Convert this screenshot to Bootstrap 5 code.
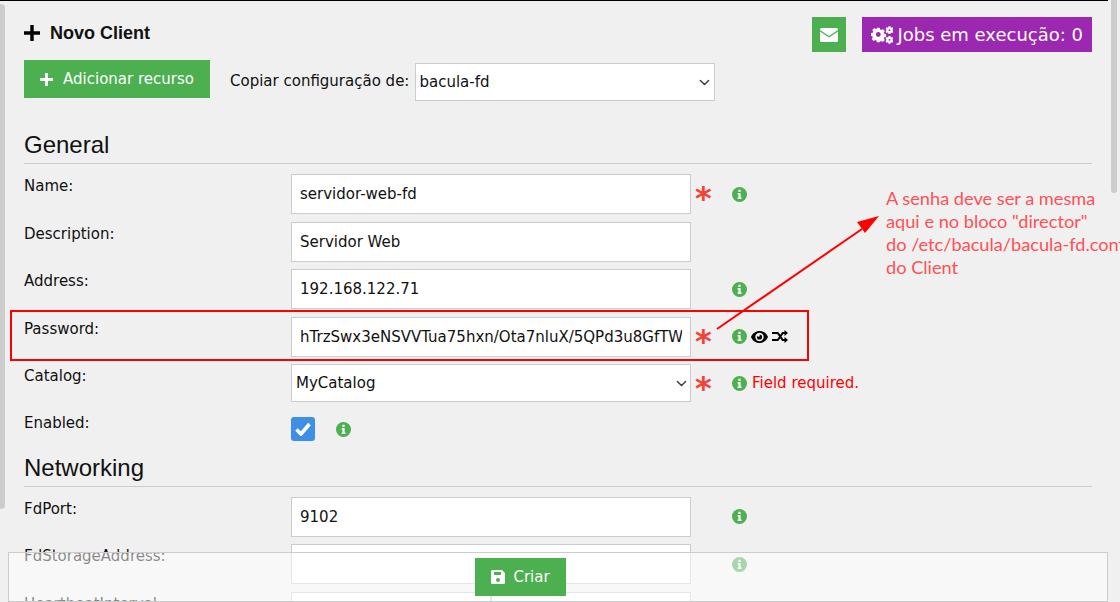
<!DOCTYPE html>
<html lang="en">
<head>
    <meta charset="UTF-8">
    <meta name="viewport" content="width=device-width, initial-scale=1.0">
    <title>Novo Client</title>
    <link href="https://cdn.jsdelivr.net/npm/bootstrap@5.3.2/dist/css/bootstrap.min.css" rel="stylesheet">
    <style>
        html, body { height: 100%; overflow: hidden; }
        body { background: #f0f0f0; color: #111; font-family: "DejaVu Sans", sans-serif; font-size: 15px; }
        .page { position: relative; height: 602px; overflow: hidden; }
        .top-line { position: absolute; left: 0; top: 0; width: 1108px; height: 1px; background: #000; }
        .scroll-left { position: absolute; left: 0; top: 4px; width: 5px; height: 505px; background: #ccc; border-radius: 0 4px 4px 0; }
        .scroll-right { position: absolute; left: 1108px; top: 0; width: 12px; height: 602px; background: #f0f0f0; }
        .scroll-right i { display: block; margin-left: 3px; width: 6px; height: 193px; background: #ccc; border-radius: 0 0 3px 3px; }
        .content { width: 1068px; margin-left: 24px; }
        .title-row { height: 60px; padding-top: 17px; }
        .title-txt { font-family: "Liberation Sans", sans-serif; font-weight: 700; font-size: 18px; line-height: 32px; color: #111; gap: 10px; }
        .sq-btn { background: #4caf50; color: #fff; width: 34px; height: 35px; border-radius: 0; border: 0; padding: 0; }
        .jobs-btn { background: #9c27b0; color: #fff; height: 35px; width: 230px; border-radius: 0; border: 0; padding: 0 9px; font-size: 18px; white-space: nowrap; }
        .action-row { height: 60px; }
        .add-btn { background: #4caf50; color: #fff; border: 0; border-radius: 0; height: 38px; width: 186px; font-size: 15px; padding: 0; gap: 10px; }
        .copy-lbl { margin: 10px 0 0 20px; }
        .copy-select { width: 300px; height: 38px; margin: 3px 0 0 6px; border-radius: 0; border: 1px solid #ccc; padding: 0 3px; font-size: 15px; color: #111; background-size: 11px 11px; background-position: right 4px center; }
        .sec-title { font-family: "Liberation Sans", sans-serif; font-size: 24px; line-height: 28px; margin: 0; padding-bottom: 4px; border-bottom: 1px solid #ccc; color: #111; }
        .sec-gen { margin-top: 11px; }
        .sec-gap { height: 10px; }
        .form-line { height: 47.5px; }
        .check-line { height: 42px; }
        .form-name { width: 267px; padding-top: 2px; line-height: 20px; flex: none; white-space: nowrap; }
        .check-line .form-name { padding-top: 1px; }
        .form-ctl { width: 400px; flex: none; }
        .form-ctl .form-control, .form-ctl .form-select { height: 40px; border-radius: 0; border: 1px solid #ccc; font-size: 15px; color: #111; padding: 0 8px; }
        .form-ctl .form-select { height: 38px; padding: 0 4px; background-size: 11px 11px; background-position: right 3px center; }
        .half-input { width: 200px; }
        .req-mark { width: 41px; flex: none; color: #f44336; font-size: 32px; line-height: 40px; padding: 4px 0 0 4px; font-weight: 700; height: 47px; overflow: hidden; }
        .info-ico { width: 15px; height: 15px; flex: none; }
        .ico-wrap { height: 40px; }
        .ico-wrap-sel { height: 38px; }
        .err-txt { color: #f00; font-size: 15px; margin-left: 5px; }
        .big-check { width: 24px; height: 24px; background: #3d8fe8; border-radius: 3px; margin-top: 5px; display: flex; align-items: center; justify-content: center; }
        .check-info { margin: 10px 0 0 21px; }
        .red-box { position: absolute; left: 10px; top: 310px; width: 799px; height: 51px; border: 2px solid #f00; }
        .note-arrow { position: absolute; left: 700px; top: 200px; width: 200px; height: 140px; }
        .note-txt { position: absolute; left: 886px; top: 187px; width: 234px; height: 94px; overflow: hidden; white-space: nowrap; color: #ff5055; font-family: Lato, sans-serif; font-weight: 400; font-size: 18.200px; line-height: 23px; }
        .save-bar { position: absolute; left: 8px; top: 552px; width: 1100px; height: 50px; background: rgba(255,255,255,.5); border: 1px solid #ccc; }
        .save-btn { position: absolute; left: 466px; top: 5px; width: 91px; height: 38px; background: #4caf50; color: #fff; border: 0; border-radius: 0; padding: 0; font-size: 15px; }
    </style>
</head>
<body>
<div class="page">
    <div class="top-line"></div>
    <div class="scroll-left"></div>
    <div class="content">
        <div class="title-row d-flex justify-content-between align-items-start">
            <div class="title-txt d-flex align-items-center">
                <svg width="16" height="16" viewBox="0 0 16 16"><path d="M6.300 0h3.400v6.300H16v3.400H9.700V16H6.300V9.700H0V6.300h6.300z" fill="#000"/></svg>
                <span>Novo Client</span>
            </div>
            <div class="d-flex gap-3">
                <button class="btn sq-btn d-flex align-items-center justify-content-center">
                    <svg width="18" height="14" viewBox="0 0 18 14"><path d="M1.500 0h15A1.500 1.500 0 0 1 18 1.500v.6L9 8 0 2.100v-.6A1.500 1.500 0 0 1 1.500 0zM0 3.600 9 9.500l9-5.900v8.900a1.500 1.500 0 0 1-1.500 1.500h-15A1.500 1.500 0 0 1 0 12.500z" fill="#fff"/></svg>
                </button>
                <button class="btn jobs-btn d-flex align-items-center gap-1">
                    <svg width="23" height="18" viewBox="0 0 23 18" fill="#fff"><path fill-rule="evenodd" d="M6 3h3l.4 1.800 1.200.5 1.600-1 2 2-1 1.600.5 1.200 1.800.4v3l-1.800.4-.5 1.200 1 1.600-2 2-1.600-1-1.200.5L9 18H6l-.4-1.800-1.200-.5-1.600 1-2-2 1-1.600-.5-1.200L0 11.500v-3l1.800-.4.5-1.200-1-1.600 2-2 1.600 1 1.200-.5zM7.500 7.500a2.500 2.500 0 1 0 0 5 2.500 2.500 0 0 0 0-5z" transform="translate(0 -1.500)"/><path fill-rule="evenodd" d="M18 0h2l.3 1 1 .5 1-.4.700 1.700-.8.700v1l.8.700-.7 1.700-1-.4-1 .5-.3 1h-2l-.3-1-1-.5-1 .4-.7-1.700.8-.7v-1l-.8-.7.7-1.700 1 .4 1-.5zm1 3a1 1 0 1 0 0 2 1 1 0 0 0 0-2z"/><path fill-rule="evenodd" d="M18 10h2l.3 1 1 .5 1-.4.700 1.700-.8.700v1l.8.700-.7 1.700-1-.4-1 .5-.3 1h-2l-.3-1-1-.5-1 .4-.7-1.700.8-.7v-1l-.8-.7.7-1.700 1 .4 1-.5zm1 3a1 1 0 1 0 0 2 1 1 0 0 0 0-2z"/></svg>
                    <span>Jobs em execução: 0</span>
                </button>
            </div>
        </div>
        <div class="action-row d-flex align-items-start">
            <button class="btn add-btn d-flex align-items-center justify-content-center">
                <svg width="13" height="13" viewBox="0 0 16 16"><path d="M6.300 0h3.400v6.300H16v3.400H9.700V16H6.300V9.700H0V6.300h6.300z" fill="#fff"/></svg>
                <span>Adicionar recurso</span>
            </button>
            <label class="copy-lbl">Copiar configuração de:</label>
            <select class="form-select copy-select"><option>bacula-fd</option></select>
        </div>

        <h3 class="sec-title sec-gen">General</h3>
        <div class="sec-gap"></div>

        <div class="form-line d-flex align-items-start">
            <div class="form-name">Name:</div>
            <div class="form-ctl"><input class="form-control" value="servidor-web-fd"></div>
            <div class="req-mark">*</div>
            <div class="ico-wrap d-flex align-items-center"><svg class="info-ico" viewBox="0 0 16 16"><use href="#info"/></svg></div>
        </div>
        <div class="form-line d-flex align-items-start">
            <div class="form-name">Description:</div>
            <div class="form-ctl"><input class="form-control" value="Servidor Web"></div>
        </div>
        <div class="form-line d-flex align-items-start">
            <div class="form-name">Address:</div>
            <div class="form-ctl"><input class="form-control" value="192.168.122.71"></div>
            <div class="req-mark"></div>
            <div class="ico-wrap d-flex align-items-center"><svg class="info-ico" viewBox="0 0 16 16"><use href="#info"/></svg></div>
        </div>
        <div class="form-line d-flex align-items-start">
            <div class="form-name">Password:</div>
            <div class="form-ctl"><input class="form-control" value="hTrzSwx3eNSVVTua75hxn/Ota7nluX/5QPd3u8GfTW"></div>
            <div class="req-mark">*</div>
            <div class="ico-wrap d-flex align-items-center gap-1">
                <svg class="info-ico" viewBox="0 0 16 16"><use href="#info"/></svg>
                <svg width="17" height="12" viewBox="0 0 17 12"><path fill-rule="evenodd" d="M8.500 0C12.400 0 15.600 2.400 17 6c-1.400 3.600-4.600 6-8.500 6S1.400 9.600 0 6C1.400 2.400 4.600 0 8.500 0zM8.500 1.800A4.200 4.200 0 1 0 8.500 10.200 4.200 4.200 0 0 0 8.500 1.800zM8.500 3.400A2.600 2.600 0 1 1 5.900 6c0-.3.100-.6.200-.9.300.4.700.6 1.200.6a1.500 1.500 0 0 0 1.500-1.500c0-.3-.1-.6-.3-.8z" fill="#000"/></svg>
                <svg width="16" height="13" viewBox="0 0 16 13"><path d="M12.500 0 16 3l-3.500 3V4h-1.300L9.500 6.500 11.200 9h1.300V7l3.500 3-3.500 3v-2h-2.300L8.300 8.200 6.200 11H0V9h5.200l2-2.500-2-2.500H0V2h6.200l2.100 2.800L10.200 2h2.300z" fill="#000"/></svg>
            </div>
        </div>
        <div class="form-line d-flex align-items-start">
            <div class="form-name">Catalog:</div>
            <div class="form-ctl"><select class="form-select"><option>MyCatalog</option></select></div>
            <div class="req-mark">*</div>
            <div class="ico-wrap-sel d-flex align-items-center">
                <svg class="info-ico" viewBox="0 0 16 16"><use href="#info"/></svg>
                <span class="err-txt">Field required.</span>
            </div>
        </div>
        <div class="form-line check-line d-flex align-items-start">
            <div class="form-name">Enabled:</div>
            <div class="big-check">
                <svg width="16" height="14" viewBox="0 0 16 14"><path d="M1.500 7.500 6 12 14.500 2" fill="none" stroke="#fff" stroke-width="3.600"/></svg>
            </div>
            <div class="check-info d-flex align-items-center"><svg class="info-ico" viewBox="0 0 16 16"><use href="#info"/></svg></div>
        </div>

        <h3 class="sec-title">Networking</h3>
        <div class="sec-gap"></div>

        <div class="form-line d-flex align-items-start">
            <div class="form-name">FdPort:</div>
            <div class="form-ctl"><input class="form-control" value="9102"></div>
            <div class="req-mark"></div>
            <div class="ico-wrap d-flex align-items-center"><svg class="info-ico" viewBox="0 0 16 16"><use href="#info"/></svg></div>
        </div>
        <div class="form-line d-flex align-items-start">
            <div class="form-name">FdStorageAddress:</div>
            <div class="form-ctl"><input class="form-control"></div>
            <div class="req-mark"></div>
            <div class="ico-wrap d-flex align-items-center"><svg class="info-ico" viewBox="0 0 16 16"><use href="#info"/></svg></div>
        </div>
        <div class="form-line d-flex align-items-start">
            <div class="form-name">HeartbeatInterval:</div>
            <div class="form-ctl d-flex"><input class="form-control half-input"><input class="form-control half-input"></div>
        </div>
    </div>

    <div class="scroll-right"><i></i></div>

    <div class="red-box"></div>
    <svg class="note-arrow" viewBox="0 0 200 140"><path d="M17 129 162 29" stroke="#f00" stroke-width="2" fill="none"/><path d="M179 16 157 22 165 33z" fill="#f00"/></svg>
    <div class="note-txt">A senha deve ser a mesma<br>aqui e no bloco "director"<br>do /etc/bacula/bacula-fd.conf<br>do Client</div>

    <div class="save-bar">
        <button class="btn save-btn d-flex align-items-center justify-content-center gap-2">
            <svg width="14" height="14" viewBox="0 0 14 14"><path fill-rule="evenodd" d="M1.500 0H11l3 3v9.500a1.500 1.500 0 0 1-1.500 1.500h-11A1.500 1.500 0 0 1 0 12.500v-11A1.500 1.500 0 0 1 1.500 0zM3 2v3h7V2zM7 8a2 2 0 1 0 0 4 2 2 0 0 0 0-4z" fill="#fff"/></svg>
            <span>Criar</span>
        </button>
    </div>
</div>

<svg width="0" height="0" class="d-none">
    <symbol id="info" viewBox="0 0 16 16">
        <circle cx="8" cy="8" r="8" fill="#4caf50"/>
        <path d="M6.800 3h2.400v2.200H6.800zM6 6.500h3.200v4.800h1v1.400H6v-1.400h.9V7.900H6z" fill="#fff"/>
    </symbol>
</svg>
<script src="https://cdn.jsdelivr.net/npm/bootstrap@5.3.2/dist/js/bootstrap.bundle.min.js"></script>
</body>
</html>
